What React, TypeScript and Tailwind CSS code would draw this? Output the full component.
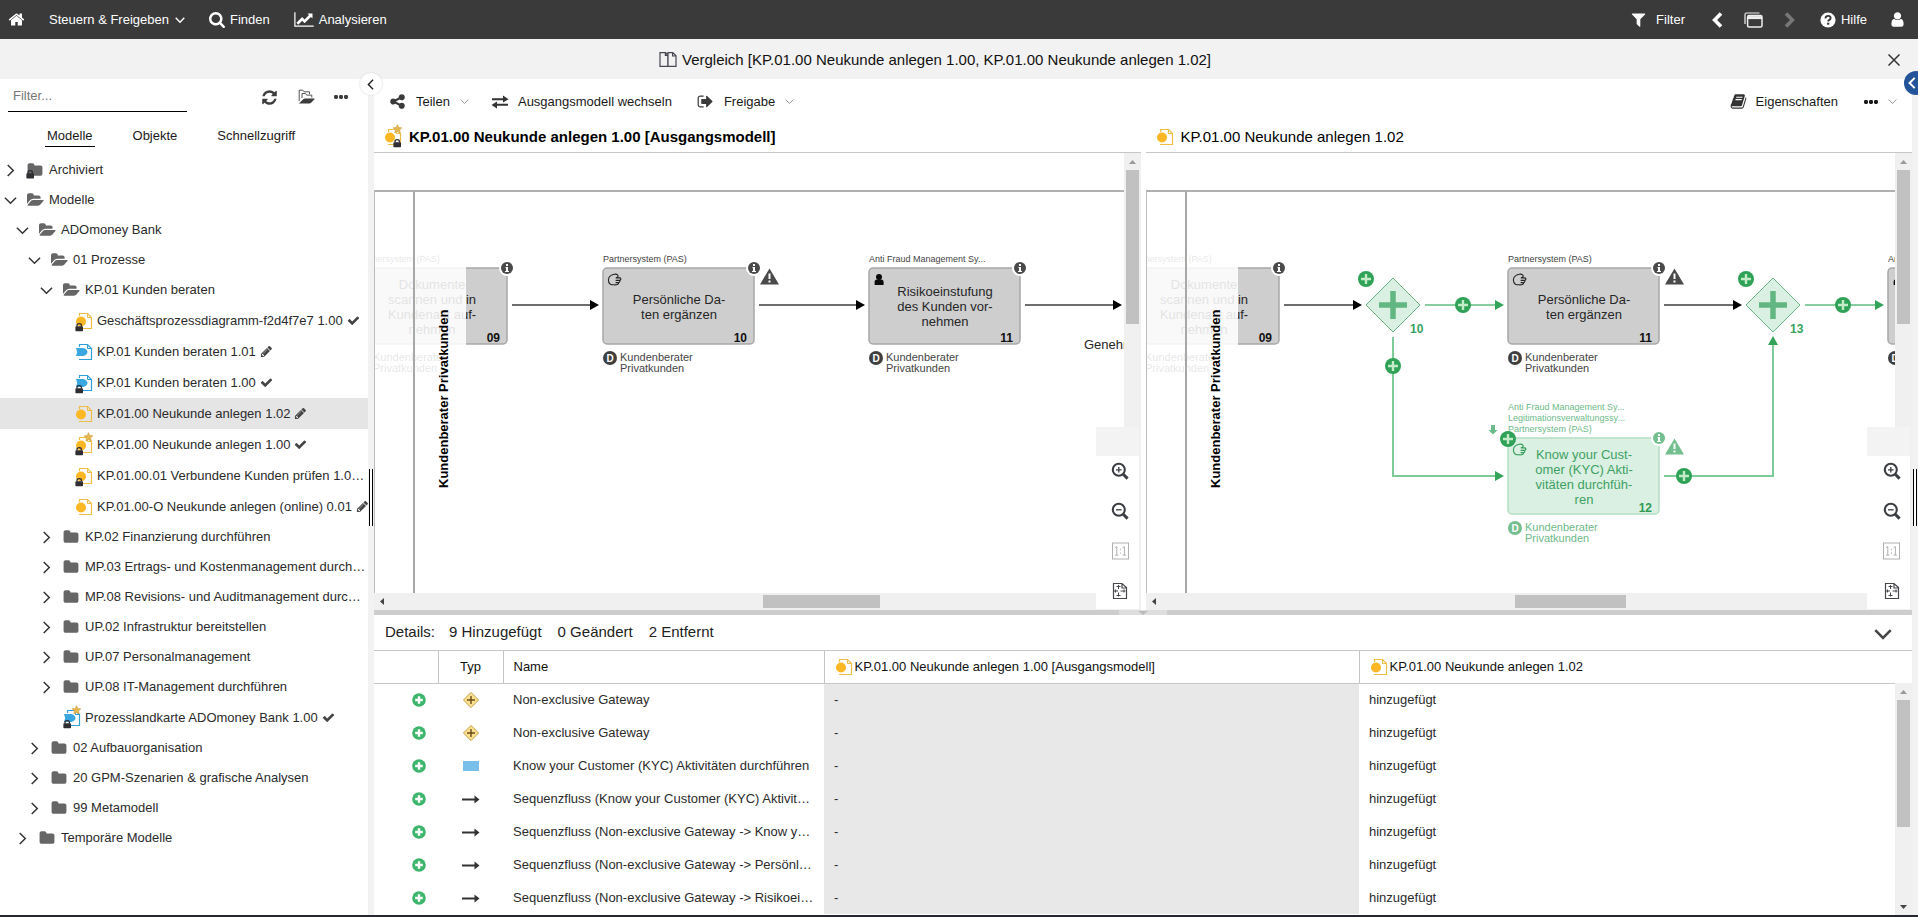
import type { ReactNode } from "react";

/* ------------------------------------------------------------------ icons */

type IconProps = { className?: string };

function Glyph({ d, className, box = "0 0 1792 1792" }: { d: string; className?: string; box?: string }) {
  return (
    <svg viewBox={box} className={className} fill="currentColor" aria-hidden="true">
      <path d={d} />
    </svg>
  );
}

const P = {
  home: "M1472 992v480q0 26-19 45t-45 19h-384v-384h-256v384h-384q-26 0-45-19t-19-45v-480q0-1 .5-3t.5-3l575-474 575 474q1 2 1 6zm223-69l-62 74q-8 9-21 11h-3q-13 0-21-7l-692-577-692 577q-12 8-24 7-13-2-21-11l-62-74q-8-10-7-23.5t11-21.5l719-599q32-26 76-26t76 26l244 204v-195q0-14 9-23t23-9h192q14 0 23 9t9 23v408l219 182q10 8 11 21.5t-7 23.5z",
  search:
    "M1216 832q0-185-131.5-316.5t-316.5-131.5-316.5 131.5-131.5 316.5 131.5 316.5 316.5 131.5 316.5-131.5 131.5-316.5zm512 832q0 52-38 90t-90 38q-54 0-90-38l-343-342q-179 124-399 124-143 0-273.5-55.5t-225-150-150-225-55.5-273.5 55.5-273.5 150-225 225-150 273.5-55.5 273.5 55.5 225 150 150 225 55.5 273.5q0 220-124 399l343 343q37 37 37 90z",
  chart:
    "M2048 1536v128h-2048v-1536h128v1408h1920zm-128-1248v435q0 21-19.5 29.5t-35.5-7.5l-121-121-633 633q-10 10-23 10t-23-10l-233-233-416 416-192-192 585-585q10-10 23-10t23 10l233 233 464-464-121-121q-16-16-7.5-35.5t29.5-19.5h435q14 0 23 9t9 23z",
  filter:
    "M1595 295q17 41-14 70l-493 493v742q0 42-39 59-13 5-25 5-27 0-45-19l-256-256q-19-19-19-45v-486l-493-493q-31-29-14-70 17-39 59-39h1280q42 0 59 39z",
  user: "M1536 1399q0 109-62.5 187t-150.5 78h-854q-88 0-150.5-78t-62.5-187q0-85 8.5-160.5t31.5-152 58.5-131 94-89 134.5-34.5q131 128 313 128t313-128q76 0 134.5 34.5t94 89 58.5 131 31.5 152 8.5 160.5zm-256-887q0 159-112.5 271.5t-271.5 112.5-271.5-112.5-112.5-271.5 112.5-271.5 271.5-112.5 271.5 112.5 112.5 271.5z",
  refresh:
    "M1639 1056q0 5-1 7-64 268-268 434.5t-478 166.5q-146 0-282.5-55t-243.5-157l-129 129q-19 19-45 19t-45-19-19-45v-448q0-26 19-45t45-19h448q26 0 45 19t19 45-19 45l-137 137q71 66 161 102t187 36q134 0 250-65t186-179q11-17 53-117 8-23 30-23h192q13 0 22.5 9.5t9.5 22.5zm25-800v448q0 26-19 45t-45 19h-448q-26 0-45-19t-19-45 19-45l138-138q-148-137-349-137-134 0-250 65t-186 179q-11 17-53 117-8 23-30 23h-199q-13 0-22.5-9.5t-9.5-22.5v-7q65-268 270-434.5t480-166.5q146 0 284 55.5t245 156.5l130-129q19-19 45-19t45 19 19 45z",
  folder:
    "M1728 608v704q0 92-66 158t-158 66h-1216q-92 0-158-66t-66-158v-960q0-92 66-158t158-66h320q92 0 158 66t66 158v32h672q92 0 158 66t66 158z",
  folderOpen:
    "M1879 952q0 31-31 66l-336 396q-43 51-120.5 86.5t-143.5 35.5h-1088q-34 0-60.5-13t-26.5-43q0-31 31-66l336-396q43-51 120.5-86.5t143.5-35.5h1088q34 0 60.5 13t26.5 43zm-343-344v160h-832q-94 0-197 47.5t-164 119.5l-337 396-5 6q0-4-.5-12.5t-.5-12.5v-960q0-92 66-158t158-66h320q92 0 158 66t66 158v32h544q92 0 158 66t66 158z",
  check:
    "M1671 566q0 40-28 68l-724 724-136 136q-28 28-68 28t-68-28l-136-136-362-362q-28-28-28-68t28-68l136-136q28-28 68-28t68 28l294 295 656-657q28-28 68-28t68 28l136 136q28 28 28 68z",
  pencil:
    "M491 1536l91-91-235-235-91 91v107h128v128h107zm523-928q0-22-22-22-10 0-17 7l-542 542q-7 7-7 17 0 22 22 22 10 0 17-7l542-542q7-7 7-17zm-54-192l416 416-832 832h-416v-416zm683 96q0 53-37 90l-166 166-416-416 166-165q36-38 90-38 53 0 91 38l235 234q37 39 37 91z",
  share:
    "M1344 1024q133 0 226.5 93.5t93.5 226.5-93.5 226.5-226.5 93.5-226.5-93.5-93.5-226.5q0-12 2-34l-360-180q-92 86-218 86-133 0-226.5-93.5t-93.5-226.5 93.5-226.5 226.5-93.5q126 0 218 86l360-180q-2-22-2-34 0-133 93.5-226.5t226.5-93.5 226.5 93.5 93.5 226.5-93.5 226.5-226.5 93.5q-126 0-218-86l-360 180q2 22 2 34t-2 34l360 180q92-86 218-86z",
  signOut:
    "M704 1440q0 4 1 20t.5 26.5-3 23.5-10 19.5-20.5 6.5h-320q-119 0-203.5-84.5t-84.5-203.5v-704q0-119 84.5-203.5t203.5-84.5h320q13 0 22.5 9.5t9.5 22.5q0 4 1 20t.5 26.5-3 23.5-10 19.5-20.5 6.5h-320q-66 0-113 47t-47 113v704q0 66 47 113t113 47h312l11.5 1 11.5 3 8 5.5 7 9 2 13.5zm928-544q0 26-19 45l-544 544q-19 19-45 19t-45-19-19-45v-288h-448q-26 0-45-19t-19-45v-384q0-26 19-45t45-19h448v-288q0-26 19-45t45-19 45 19l544 544q19 19 19 45z",
  book: "M1703 478q40 57 18 129l-275 906q-19 64-76.5 107.5t-122.5 43.5h-923q-77 0-148.5-53.5t-99.5-131.5q-24-67-2-127 0-4 3-27t4-37q1-8-3-21.5t-3-19.5q2-11 8-21t16.5-23.5 16.5-23.5q23-38 45-91.5t30-91.5q3-10 .5-30t-.5-28q3-11 17-28t17-23q21-36 42-92t25-90q1-9-2.5-32t.5-28q4-13 22-30.5t22-22.5q19-26 42.5-84.5t27.5-96.5q1-8-3-25.5t-2-26.5q2-8 9-18t18-23 17-21q8-12 16.5-30.5t15-35 16-36 19.5-32 26.5-23.5 36-11.5 47.5 5.5l-1 3q38-9 51-9h761q74 0 114 56t18 130l-274 906q-36 119-71.5 153.5t-128.5 34.5h-869q-27 0-38 15-11 16-1 43 24 70 144 70h923q29 0 56-15.5t35-41.5l300-987q7-22 5-57 38 15 59 43zm-1064 2q-4 13 2 22.5t20 9.5h608q13 0 25.5-9.5t16.5-22.5l21-64q4-13-2-22.5t-20-9.5h-608q-13 0-25.5 9.5t-16.5 22.5zm-83 256q-4 13 2 22.5t20 9.5h608q13 0 25.5-9.5t16.5-22.5l21-64q4-13-2-22.5t-20-9.5h-608q-13 0-25.5 9.5t-16.5 22.5z",
};

function Angle({ dir, className, width = 1.6 }: IconProps & { dir: "left" | "right" | "down"; width?: number }) {
  const d = { left: "M9 1L3 7l6 6", right: "M4 1l6 6-6 6", down: "M1 4l6 6 6-6" }[dir];
  return (
    <svg viewBox="0 0 14 14" className={className} fill="none" stroke="currentColor" strokeWidth={width} aria-hidden="true">
      <path d={d} />
    </svg>
  );
}

function Dots({ className }: IconProps) {
  return (
    <svg viewBox="0 0 14 4" className={className} fill="currentColor" aria-hidden="true">
      <rect x="0" y="0" width="4" height="4" rx="1.4" />
      <rect x="5" y="0" width="4" height="4" rx="1.4" />
      <rect x="10" y="0" width="4" height="4" rx="1.4" />
    </svg>
  );
}

function Swap({ className }: IconProps) {
  return (
    <svg viewBox="0 0 18 14" className={className} fill="currentColor" aria-hidden="true">
      <path d="M1 3.200h11V.6l5.500 3.600L12 7.600V5.200H1z M17 8.800H6V6.400L.5 10 6 13.400v-2.600h11z" />
    </svg>
  );
}

function CompareIcon({ className }: IconProps) {
  return (
    <svg viewBox="0 0 18 17" className={className} fill="none" stroke="#4a4652" strokeWidth="1.2" aria-hidden="true">
      <path d="M1 1.6h5.6L8.8 4v11.4H1z M9 15.4V1.6h4.8L17 4.8v10.6z M13.6 1.8v3.2H17 M6.4 1.8v2.6h2.4" />
    </svg>
  );
}

function FoldersIcon({ className }: IconProps) {
  return (
    <svg viewBox="0 0 18 16" className={className} aria-hidden="true">
      <path d="M5 9V4.500h3.600l1.200 1.600h5v2.400" fill="none" stroke="#555" />
      <path d="M2.200 12V1.200h3.600l1.300 1.600h5.400v2.400" fill="none" stroke="#555" />
      <path d="M1.800 14.6L6 10.400q.7-.8 1.800-.8h9.400q.8 0 .3.7l-3.4 3.500q-.7.8-1.800.8z" fill="#3d3d3d" />
    </svg>
  );
}

function WindowsIcon({ className }: IconProps) {
  return (
    <svg viewBox="0 0 19 16" className={className} fill="none" stroke="#eee" aria-hidden="true">
      <path d="M1 12V2.5Q1 1 2.5 1H15.5" strokeWidth="1.2" />
      <rect x="3.6" y="3.6" width="14.4" height="11.4" rx="1.5" strokeWidth="1.5" />
      <path d="M3.6 5.6H18" strokeWidth="3" />
    </svg>
  );
}

function HelpIcon({ className }: IconProps) {
  return (
    <svg viewBox="0 0 16 16" className={className} aria-hidden="true">
      <circle cx="8" cy="8" r="7.6" fill="#fff" />
      <path d="M5.4 6.3Q5.7 3.9 8.1 3.9q2.5 0 2.5 2.1 0 1.1-1.2 1.9-1.2.7-1.2 1.7" fill="none" stroke="#3a3a3a" strokeWidth="1.9" />
      <rect x="7.1" y="10.7" width="2.2" height="2" fill="#3a3a3a" />
    </svg>
  );
}

function ZoomIcon({ plus, className }: IconProps & { plus?: boolean }) {
  return (
    <svg viewBox="0 0 18 18" className={className} fill="none" stroke="#3a3d42" aria-hidden="true">
      <circle cx="7.8" cy="7.8" r="6" strokeWidth="2.1" />
      <path d="M12.2 12.2l4.4 4.4" strokeWidth="3" />
      <path d={plus ? "M5 7.8h5.6M7.8 5v5.6" : "M5 7.8h5.6"} strokeWidth="1.3" />
    </svg>
  );
}

function OneToOneIcon({ className }: IconProps) {
  return (
    <svg viewBox="0 0 17 17" className={className} aria-hidden="true">
      <rect x=".5" y=".5" width="16" height="16" fill="none" stroke="#b0b0b0" />
      <path d="M3 5.4L4.8 4v8.6M3 12.6h3.4M10.6 5.4L12.4 4v8.6M10.6 12.6H14M8.4 6.4v1.4M8.4 10v1.4" fill="none" stroke="#b0b0b0" />
    </svg>
  );
}

function FitIcon({ className }: IconProps) {
  return (
    <svg viewBox="0 0 16 18" className={className} fill="none" stroke="#46464c" aria-hidden="true">
      <path d="M1.500 1.500h8.500l4.500 4v11h-13z M10 1.500v4.500h4.500" strokeWidth="1.200" />
      <path d="M6.500 3v4M4.500 4.500h4M6.500 14.500v-4M4.500 13.500h4M2 9h4M3.500 7.500v3M8.500 9h5M12 7.500v3" />
    </svg>
  );
}

type DocKind = "process" | "map";

function DocIcon({ kind = "process", lock, star, className = "h-5 w-[18px]" }: IconProps & { kind?: DocKind; lock?: "left" | "right"; star?: boolean }) {
  const line = kind === "map" ? "#2f9fd8" : "#efbd45";
  const lx = lock === "right" ? 9 : 0;
  return (
    <svg viewBox="0 0 18 20" className={`${className} shrink-0 overflow-visible`} aria-hidden="true">
      <path d="M4.500 5V2.500h8l4 4V17.500h-12.500" fill="none" stroke={line} strokeWidth="1.200" />
      <path d="M12.500 2.500V6.500h4" fill="none" stroke={line} />
      {kind === "map" ? (
        <path d="M1 6H8.500Q12.500 7.500 12.500 10T8.500 14H1L2.200 10z" fill="#3ba7e0" />
      ) : (
        <circle cx="6" cy="10.500" r="5" fill="#fbb824" />
      )}
      {star && (
        <path
          d="M13.500-2.400l1.300 2.800 3.100.4-2.300 2.100.6 3.100-2.700-1.500-2.700 1.500.6-3.100-2.300-2.100 3.100-.4z"
          fill="#e6b64e"
          stroke="#c99a3a"
          strokeWidth=".5"
        />
      )}
      {lock && (
        <g transform={`translate(${lx} 12)`}>
          <rect x=".4" y="3.200" width="7.600" height="5" rx=".8" fill="#2e2e33" />
          <path d="M2 3.600V2.400q0-1.800 2.200-1.800t2.200 1.800v1.200" fill="none" stroke="#2e2e33" strokeWidth="1.300" />
        </g>
      )}
    </svg>
  );
}

function LockedFolder() {
  return (
    <span className="relative block h-4 w-4 shrink-0">
      <Glyph d={P.folder} className="h-4 w-4 text-[#666]" />
      <svg viewBox="0 0 9 9" className="absolute top-2 -left-px h-[9px] w-[9px]" aria-hidden="true">
        <rect x=".4" y="3.200" width="7.600" height="5.400" rx=".8" fill="#2e2e33" />
        <path d="M2 3.600V2.400q0-1.800 2.200-1.800t2.200 1.800v1.200" fill="none" stroke="#2e2e33" strokeWidth="1.300" />
      </svg>
    </span>
  );
}

/* -------------------------------------------------------------- tree data */

type Node = {
  level: 0 | 1 | 2 | 3 | 4;
  label: string;
  type: "closed" | "open" | "locked" | "doc";
  kind?: DocKind;
  lock?: boolean;
  star?: boolean;
  state?: "check" | "pencil";
  active?: boolean;
};

const tree: Node[] = [
  { level: 0, label: "Archiviert", type: "locked" },
  { level: 0, label: "Modelle", type: "open" },
  { level: 1, label: "ADOmoney Bank", type: "open" },
  { level: 2, label: "01 Prozesse", type: "open" },
  { level: 3, label: "KP.01 Kunden beraten", type: "open" },
  { level: 4, label: "Geschäftsprozessdiagramm-f2d4f7e7 1.00", type: "doc", lock: true, state: "check" },
  { level: 4, label: "KP.01 Kunden beraten 1.01", type: "doc", kind: "map", state: "pencil" },
  { level: 4, label: "KP.01 Kunden beraten 1.00", type: "doc", kind: "map", lock: true, state: "check" },
  { level: 4, label: "KP.01.00 Neukunde anlegen 1.02", type: "doc", state: "pencil", active: true },
  { level: 4, label: "KP.01.00 Neukunde anlegen 1.00", type: "doc", lock: true, star: true, state: "check" },
  { level: 4, label: "KP.01.00.01 Verbundene Kunden prüfen 1.0…", type: "doc", lock: true },
  { level: 4, label: "KP.01.00-O Neukunde anlegen (online) 0.01", type: "doc", state: "pencil" },
  { level: 3, label: "KP.02 Finanzierung durchführen", type: "closed" },
  { level: 3, label: "MP.03 Ertrags- und Kostenmanagement durch…", type: "closed" },
  { level: 3, label: "MP.08 Revisions- und Auditmanagement durc…", type: "closed" },
  { level: 3, label: "UP.02 Infrastruktur bereitstellen", type: "closed" },
  { level: 3, label: "UP.07 Personalmanagement", type: "closed" },
  { level: 3, label: "UP.08 IT-Management durchführen", type: "closed" },
  { level: 3, label: "Prozesslandkarte ADOmoney Bank 1.00", type: "doc", kind: "map", lock: true, star: true, state: "check" },
  { level: 2, label: "02 Aufbauorganisation", type: "closed" },
  { level: 2, label: "20 GPM-Szenarien & grafische Analysen", type: "closed" },
  { level: 2, label: "99 Metamodell", type: "closed" },
  { level: 1, label: "Temporäre Modelle", type: "closed" },
];

const indent = ["pl-0", "pl-3", "pl-6", "pl-9", "pl-12"];

function TreeRow({ node }: { node: Node }) {
  const doc = node.type === "doc";
  return (
    <li className={`flex items-center ${indent[node.level]} ${doc ? "h-[31px]" : "h-[30px]"} ${node.active ? "bg-[#e5e5e5]" : ""}`}>
      <span className="flex w-[27px] shrink-0 pl-1">
        {!doc && (
          <button type="button" aria-label={`${node.label} umschalten`} className="text-[#333]">
            <Angle dir={node.type === "open" ? "down" : "right"} className="h-[13px] w-[13px]" />
          </button>
        )}
      </span>
      <span className="flex w-[22px] shrink-0">
        {doc && <DocIcon kind={node.kind} lock={node.lock ? "left" : undefined} star={node.star} />}
        {node.type === "locked" && <LockedFolder />}
        {node.type === "open" && <Glyph d={P.folderOpen} box="0 0 1920 1792" className="h-4 w-[17px] text-[#666]" />}
        {node.type === "closed" && <Glyph d={P.folder} className="h-4 w-4 text-[#666]" />}
      </span>
      <span className="whitespace-nowrap">{node.label}</span>
      {node.state && <Glyph d={P[node.state]} className="ml-1 h-[13px] w-[13px] shrink-0 text-[#444]" />}
    </li>
  );
}

function Sidebar() {
  return (
    <aside className="flex w-[368px] shrink-0 flex-col overflow-hidden text-[#2b2b2b]">
      <div className="flex items-start pt-1 pr-5 pl-2">
        <input
          type="text"
          aria-label="Filter"
          placeholder="Filter..."
          className="h-[29px] w-[179px] border-b border-black px-[5px] pb-1 placeholder:text-[#777] focus:outline-none"
        />
        <div className="ml-auto flex h-7 items-center gap-[19px]">
          <button type="button" aria-label="Aktualisieren">
            <Glyph d={P.refresh} className="h-[17px] w-[17px] text-[#3d3d3d]" />
          </button>
          <button type="button" aria-label="Ordner">
            <FoldersIcon className="h-4 w-[18px]" />
          </button>
          <button type="button" aria-label="Mehr" className="text-[#3d3d3d]">
            <Dots className="h-1 w-[14px]" />
          </button>
        </div>
      </div>
      <nav className="flex gap-9 pt-[13px] pb-2 pl-[45px] text-[#1a1a1a]">
        <button type="button" className="h-[22px] border-b border-black px-[2px]">Modelle</button>
        <button type="button" className="h-[22px] px-[2px]">Objekte</button>
        <button type="button" className="h-[22px] px-[2px]">Schnellzugriff</button>
      </nav>
      <ul>
        {tree.map((n) => (
          <TreeRow key={n.label} node={n} />
        ))}
      </ul>
    </aside>
  );
}

/* --------------------------------------------------------------- diagrams */

type Tone = "grey" | "green";

const tones = {
  grey: { fill: "#cecece", edge: "#a8a8a8", text: "#262626", label: "#444", icon: "#4a4a4a", num: "#111", hand: "#222" },
  green: { fill: "#daf0e2", edge: "#b4dec4", text: "#3fa163", label: "#6dba89", icon: "#74bf8f", num: "#2f9a55", hand: "#2f9a55" },
};

function Task({
  x,
  y,
  num,
  lines,
  systems,
  marker,
  warn,
  tone = "grey",
}: {
  x: number;
  y: number;
  num: string;
  lines: string[];
  systems: string[];
  marker?: "hand" | "person";
  warn?: boolean;
  tone?: Tone;
}) {
  const c = tones[tone];
  const first = 43 - ((lines.length - 1) * 15) / 2;
  return (
    <g transform={`translate(${x} ${y})`}>
      {systems.map((s, i) => (
        <text key={s} x="0" y={-6 - (systems.length - 1 - i) * 11} fontSize="9" fill={c.label}>
          {s}
        </text>
      ))}
      <rect x="0" y="0" width="151" height="76" rx="4" fill={c.fill} stroke={c.edge} strokeWidth="1.500" />
      {marker === "hand" && (
        <path
          d="M8 7.400C4.600 9.400 4.600 14 7.400 16.200C8.600 17 13.600 17 14.600 16.400C15.800 15.800 15.600 15 15.300 14.600C17 14.400 17.200 13 16.400 12.500C18.300 12.200 18.300 10.100 16.800 9.900H12.800C15 9.600 15.800 7.800 14.600 6.800C13.200 5.600 9.600 6.200 8 7.400zM12.600 12.400H16.400M12.600 14.600H15.300"
          fill="none"
          stroke={c.hand}
          strokeWidth="1.100"
        />
      )}
      {marker === "person" && (
        <g fill="#0a0a0a">
          <circle cx="10" cy="9" r="3" />
          <path d="M5.600 16.500V14Q5.600 11.400 8 11.400H12Q14.600 11.400 14.600 14V16.500Q14.600 17 14 17H6.200Q5.600 17 5.600 16.500z" />
        </g>
      )}
      {lines.map((l, i) => (
        <text key={l} x="76" y={first + i * 15} fontSize="13" textAnchor="middle" fill={c.text}>
          {l}
        </text>
      ))}
      <text x="144" y="74" fontSize="12" fontWeight="bold" textAnchor="end" fill={c.num}>
        {num}
      </text>
      <circle cx="151" cy="0" r="8" fill="#fff" />
      <circle cx="151" cy="0" r="6" fill={c.icon} />
      <path d="M150-4h2v2h-2zM149.500-1h2.500v4h1v1h-4v-1h1v-3h-.5z" fill="#fff" />
      {warn && (
        <g>
          <path d="M166.500 .6L176 16.400H157z" fill={c.icon} />
          <path d="M166.500 5.500V11M166.500 12.400V14.400" stroke="#fff" strokeWidth="2" />
        </g>
      )}
      <circle cx="7" cy="90" r="7" fill={tone === "grey" ? "#3f3f3f" : c.icon} />
      <text x="7" y="94" fontSize="10" fontWeight="bold" textAnchor="middle" fill="#fff">
        D
      </text>
      <text x="17" y="93" fontSize="11" fill={c.label}>
        Kundenberater
      </text>
      <text x="17" y="104" fontSize="11" fill={c.label}>
        Privatkunden
      </text>
    </g>
  );
}

function Arrow({ from, to, y, green }: { from: number; to: number; y: number; green?: boolean }) {
  return (
    <g>
      <path d={`M${from} ${y}H${to - 6}`} stroke={green ? "#86cda0" : "#6e6e6e"} strokeWidth="2" />
      <path d={`M${to - 9} ${y - 5}L${to} ${y}L${to - 9} ${y + 5}z`} fill={green ? "#34a45b" : "#000"} />
    </g>
  );
}

function Added({ x, y }: { x: number; y: number }) {
  return (
    <g>
      <circle cx={x} cy={y} r="8" fill="#2fa257" />
      <path d={`M${x - 5} ${y}h10M${x} ${y - 5}v10`} stroke="#c4ecc8" strokeWidth="2.400" />
    </g>
  );
}

function Gateway({ x, y, num }: { x: number; y: number; num: string }) {
  return (
    <g>
      <path d={`M${x} ${y - 27}l27 27l-27 27l-27-27z`} fill="#daf0e2" stroke="#68b583" />
      <path d={`M${x - 14} ${y}h28M${x} ${y - 14}v28`} stroke="#62b681" strokeWidth="5.500" />
      <text x={x + 17} y={y + 28} fontSize="12" fontWeight="bold" fill="#3aa35f">
        {num}
      </text>
      <Added x={x - 27} y={y - 26} />
    </g>
  );
}

function Pool() {
  return (
    <g>
      <Task x={-18} y={115} num="09" lines={["Dokumente", "scannen und in", "Kundenakt auf-", "nehmen"]} systems={["Partnersystem (PAS)"]} />
      <rect x="0" y="96" width="92" height="130" fill="#fff" fillOpacity=".87" />
      <path d="M0 38H3000" stroke="#b0b0b0" strokeWidth="2" />
      <path d="M.5 38V3000" stroke="#bdbdbd" />
      <path d="M40 38V3000" stroke="#a8a8a8" strokeWidth="2" />
      <text transform="translate(74 335) rotate(-90)" fontSize="13" fontWeight="bold" fill="#000">
        Kundenberater Privatkunden
      </text>
    </g>
  );
}

function BaseDiagram() {
  return (
    <>
      <Pool />
      <Arrow from={138} to={225} y={152} />
      <Task x={229} y={115} num="10" lines={["Persönliche Da-", "ten ergänzen"]} systems={["Partnersystem (PAS)"]} marker="hand" warn />
      <Arrow from={385} to={491} y={152} />
      <Task x={495} y={115} num="11" lines={["Risikoeinstufung", "des Kunden vor-", "nehmen"]} systems={["Anti Fraud Management Sy..."]} marker="person" />
      <Arrow from={651} to={748} y={152} />
      <text x="710" y="196" fontSize="13" fill="#262626">
        Genehmigung
      </text>
    </>
  );
}

function ChangedDiagram() {
  return (
    <>
      <Pool />
      <Arrow from={138} to={216} y={152} />
      <Arrow from={279} to={358} y={152} green />
      <Added x={317} y={152} />
      <path d="M247 184V323H352" fill="none" stroke="#7ccb98" strokeWidth="2" />
      <path d="M349 318L358 323L349 328z" fill="#34a45b" />
      <Added x={247} y={213} />
      <Gateway x={247} y={152} num="10" />
      <Task x={362} y={115} num="11" lines={["Persönliche Da-", "ten ergänzen"]} systems={["Partnersystem (PAS)"]} marker="hand" warn />
      <Arrow from={518} to={596} y={152} />
      <Gateway x={627} y={152} num="13" />
      <Arrow from={659} to={738} y={152} green />
      <Added x={697} y={152} />
      <path d="M518 323H627V190" fill="none" stroke="#7ccb98" strokeWidth="2" />
      <path d="M622 192L627 183L632 192z" fill="#34a45b" />
      <Task
        x={362}
        y={285}
        num="12"
        tone="green"
        lines={["Know your Cust-", "omer (KYC) Akti-", "vitäten durchfüh-", "ren"]}
        systems={["Anti Fraud Management Sy...", "Legitimationsverwaltungssy...", "Partnersystem (PAS)"]}
        marker="hand"
        warn
      />
      <Added x={362} y={286} />
      <path d="M345 272h4v5h2.500l-4.500 4.500l-4.500-4.500h2.500z" fill="#6cbb88" />
      <Added x={538} y={323} />
      <Task x={742} y={115} num="14" lines={["Risikoeinstufung", "des Kunden vor-", "nehmen"]} systems={["Anti Fraud Management Sy..."]} marker="person" />
    </>
  );
}

function ZoomTools() {
  return (
    <div className="absolute right-[2px] bottom-px w-[43px] bg-white">
      <div className="h-[29px] bg-[#f3f3f3]" />
      <div className="flex flex-col items-center gap-[22px] pt-[6px] pb-[9px] pl-[6px]">
        <button type="button" aria-label="Vergrößern">
          <ZoomIcon plus className="h-[18px] w-[18px]" />
        </button>
        <button type="button" aria-label="Verkleinern">
          <ZoomIcon className="h-[18px] w-[18px]" />
        </button>
        <button type="button" aria-label="Originalgröße" disabled>
          <OneToOneIcon className="h-[18px] w-[17px]" />
        </button>
        <button type="button" aria-label="Einpassen">
          <FitIcon className="h-[18px] w-4" />
        </button>
      </div>
    </div>
  );
}

function VerticalBar({ thumb, end }: { thumb: string; end?: boolean }) {
  return (
    <div className="flex w-[17px] flex-col items-center bg-[#f0f0f0]">
      <svg viewBox="0 0 17 17" className="h-[17px] w-[17px] shrink-0" fill="#9a9a9a" aria-hidden="true">
        <path d="M5 11l3.500-4L12 11z" />
      </svg>
      <div className={`w-[13px] shrink-0 bg-[#c1c1c1] ${thumb}`} />
      {end && (
        <svg viewBox="0 0 17 17" className="mt-auto h-[17px] w-[17px] shrink-0" fill="#444" aria-hidden="true">
          <path d="M5 7l3.500 4L12 7z" />
        </svg>
      )}
    </div>
  );
}

function Pane({ title, icon, bold, thumb, children }: { title: string; icon: ReactNode; bold?: boolean; thumb: string; children: ReactNode }) {
  return (
    <section className="flex min-w-0 flex-1 flex-col">
      <h2 className={`flex h-8 items-center border-b border-[#c6c6c6] pl-[10px] text-[15px] text-black ${bold ? "font-bold" : ""}`}>
        <span className="flex w-[25px] shrink-0">{icon}</span>
        {title}
      </h2>
      <div className="relative grid min-h-0 flex-1 grid-cols-[1fr_17px] grid-rows-[1fr_17px]">
        <div className="min-h-0 min-w-0 overflow-hidden">
          <svg className="h-full w-full overflow-hidden" fontFamily="'Liberation Sans', Arial, sans-serif">
            {children}
          </svg>
        </div>
        <VerticalBar thumb="h-[154px]" />
        <div className="col-span-2 flex items-center bg-[#f0f0f0]">
          <svg viewBox="0 0 17 17" className="h-[17px] w-[17px] shrink-0" fill="#444" aria-hidden="true">
            <path d="M10 5L6 8.500L10 12z" />
          </svg>
          <div className={`h-[13px] bg-[#c1c1c1] ${thumb}`} />
        </div>
        <ZoomTools />
      </div>
    </section>
  );
}

/* ---------------------------------------------------------------- details */

type RowType = "gateway" | "task" | "flow";

const rows: { type: RowType; name: string }[] = [
  { type: "gateway", name: "Non-exclusive Gateway" },
  { type: "gateway", name: "Non-exclusive Gateway" },
  { type: "task", name: "Know your Customer (KYC) Aktivitäten durchführen" },
  { type: "flow", name: "Sequenzfluss (Know your Customer (KYC) Aktivit…" },
  { type: "flow", name: "Sequenzfluss (Non-exclusive Gateway -> Know y…" },
  { type: "flow", name: "Sequenzfluss (Non-exclusive Gateway -> Persönl…" },
  { type: "flow", name: "Sequenzfluss (Non-exclusive Gateway -> Risikoei…" },
];

function TypeIcon({ type }: { type: RowType }) {
  return (
    <svg viewBox="0 0 18 18" className="mx-auto h-[18px] w-[18px]" aria-hidden="true">
      {type === "gateway" && (
        <>
          <path d="M9 1.400L16.600 9L9 16.600L1.400 9z" fill="#fbe08e" stroke="#c4a04a" />
          <path d="M5 9h8M9 5v8" stroke="#6b4a1c" strokeWidth="1.400" />
        </>
      )}
      {type === "task" && <rect x="1" y="4" width="16" height="10" fill="#78c0ea" />}
      {type === "flow" && (
        <>
          <path d="M0 9.500H13" stroke="#333" strokeWidth="2" />
          <path d="M12.500 5.500L17.500 9.500L12.500 13.500z" fill="#333" />
        </>
      )}
    </svg>
  );
}

function Details() {
  const th = "border-[#c6c6c6] text-left font-normal";
  return (
    <section className="flex h-[300px] shrink-0 flex-col">
      <div className="flex h-9 shrink-0 items-center border-b border-[#c6c6c6] pr-5 pb-[2px] pl-[11px] text-[15px] text-[#222]">
        <span className="mr-[14px]">Details:</span>
        <span className="mr-4">9 Hinzugefügt</span>
        <span className="mr-4">0 Geändert</span>
        <span>2 Entfernt</span>
        <button type="button" aria-label="Details einklappen" className="ml-auto pt-1 text-[#444]">
          <Angle dir="down" width={2} className="h-[18px] w-[18px]" />
        </button>
      </div>
      <div className="relative min-h-0 flex-1 overflow-hidden">
        <table className="w-full table-fixed border-collapse text-[#2b2b2b]">
          <colgroup>
            <col className="w-[64px]" />
            <col className="w-[65px]" />
            <col className="w-[321px]" />
            <col className="w-[535px]" />
            <col />
          </colgroup>
          <thead>
            <tr className="h-8 border-b border-[#c6c6c6] text-[#111]">
              <th className={`${th} border-r`} aria-label="Änderung" />
              <th className="border-r border-[#c6c6c6] text-center font-normal">Typ</th>
              <th className={`${th} border-r pl-[10px]`}>Name</th>
              <th className={`${th} border-r pl-[10px]`}>
                <span className="flex items-center gap-[2px]">
                  <DocIcon />
                  KP.01.00 Neukunde anlegen 1.00 [Ausgangsmodell]
                </span>
              </th>
              <th className={`${th} pl-[10px]`}>
                <span className="flex items-center gap-[2px]">
                  <DocIcon />
                  KP.01.00 Neukunde anlegen 1.02
                </span>
              </th>
            </tr>
          </thead>
          <tbody>
            {rows.map((r, i) => (
              <tr key={i} className="h-[33px]">
                <td className="pl-[38px]">
                  <svg viewBox="0 0 14 14" className="h-[14px] w-[14px]" role="img" aria-label="hinzugefügt">
                    <circle cx="7" cy="7" r="6.800" fill="#3db56c" />
                    <path d="M3.200 7h7.600M7 3.200v7.600" stroke="#fff" strokeWidth="2.400" />
                  </svg>
                </td>
                <td>
                  <TypeIcon type={r.type} />
                </td>
                <td className="pl-[10px] whitespace-nowrap">{r.name}</td>
                <td className="bg-[#e8e8e8] pl-[10px]">-</td>
                <td className="pl-[10px]">hinzugefügt</td>
              </tr>
            ))}
          </tbody>
        </table>
        <div className="absolute top-8 right-0 bottom-0 flex">
          <VerticalBar thumb="h-[127px]" end />
        </div>
      </div>
    </section>
  );
}

/* -------------------------------------------------------------------- app */

function TopBar() {
  return (
    <header className="flex h-[39px] shrink-0 items-center bg-[#3a3a3a] pr-3 pl-2 text-white">
      <a href="#home" aria-label="Start" className="mr-6">
        <Glyph d={P.home} className="h-[17px] w-[17px]" />
      </a>
      <button type="button" className="mr-6 flex items-center gap-[6px]">
        Steuern &amp; Freigeben
        <Angle dir="down" width={2} className="h-[10px] w-[10px]" />
      </button>
      <button type="button" className="mr-6 flex items-center gap-[5px]">
        <Glyph d={P.search} box="64 128 1664 1664" className="h-4 w-4" />
        Finden
      </button>
      <button type="button" className="flex items-center gap-[5px]">
        <Glyph d={P.chart} box="0 0 2048 1792" className="h-[17px] w-5" />
        Analysieren
      </button>
      <div className="ml-auto flex items-center">
        <button type="button" className="mr-[26px] flex items-center gap-[9px]">
          <Glyph d={P.filter} className="h-[17px] w-[17px]" />
          Filter
        </button>
        <button type="button" aria-label="Zurück" className="mr-[21px]">
          <svg viewBox="0 0 12 16" className="h-4 w-3" fill="none" stroke="#fff" strokeWidth="3.600" aria-hidden="true">
            <path d="M10 1.500L3.600 8L10 14.500" />
          </svg>
        </button>
        <button type="button" aria-label="Fenster" className="mr-[21px]">
          <WindowsIcon className="h-4 w-[19px]" />
        </button>
        <button type="button" aria-label="Vor" className="mr-6" disabled>
          <svg viewBox="0 0 12 16" className="h-4 w-3" fill="none" stroke="#777" strokeWidth="3.600" aria-hidden="true">
            <path d="M2 1.500L8.400 8L2 14.500" />
          </svg>
        </button>
        <button type="button" className="mr-[22px] flex items-center gap-[5px]">
          <HelpIcon className="h-4 w-4" />
          Hilfe
        </button>
        <button type="button" aria-label="Benutzer">
          <Glyph d={P.user} className="h-[17px] w-[17px]" />
        </button>
      </div>
    </header>
  );
}

function Toolbar() {
  return (
    <div className="flex h-[42px] shrink-0 items-center pt-[3px] pr-[15px] pl-[15px] text-[#1a1a1a]">
      <button type="button" className="mr-[22px] flex items-center">
        <Glyph d={P.share} className="mr-[10px] h-[17px] w-[17px] text-[#3a3a3a]" />
        Teilen
        <Angle dir="down" width={1.4} className="ml-[10px] h-[9px] w-[9px] text-[#888]" />
      </button>
      <button type="button" className="mr-[25px] flex items-center gap-[9px]">
        <Swap className="h-[14px] w-[18px] text-[#333]" />
        Ausgangsmodell wechseln
      </button>
      <button type="button" className="flex items-center">
        <Glyph d={P.signOut} className="mr-[10px] h-[17px] w-[17px] text-[#3a3a3a]" />
        Freigabe
        <Angle dir="down" width={1.4} className="ml-[10px] h-[9px] w-[9px] text-[#888]" />
      </button>
      <button type="button" className="mr-[26px] ml-auto flex items-center gap-[9px]">
        <Glyph d={P.book} className="h-[17px] w-[17px] text-[#333]" />
        Eigenschaften
      </button>
      <button type="button" aria-label="Mehr" className="flex items-center gap-[10px]">
        <Dots className="h-1 w-[14px]" />
        <Angle dir="down" width={1.4} className="h-[9px] w-[9px] text-[#888]" />
      </button>
    </div>
  );
}

export default function App() {
  return (
    <div className="flex h-screen flex-col overflow-hidden border-b-2 border-[#23272e] bg-[#f2f2f2] font-['Liberation_Sans',Arial,sans-serif] text-[13px] leading-4">
      <TopBar />
      <div className="flex h-10 shrink-0 items-center pt-px">
        <h1 className="flex flex-1 items-center justify-center gap-[5px] text-[15px] text-[#111]">
          <CompareIcon className="h-[17px] w-[18px]" />
          Vergleich [KP.01.00 Neukunde anlegen 1.00, KP.01.00 Neukunde anlegen 1.02]
        </h1>
        <button type="button" aria-label="Schließen" className="flex w-12 justify-center">
          <svg viewBox="0 0 12 12" className="h-3 w-3" stroke="#333" strokeWidth="1.500" aria-hidden="true">
            <path d="M.5.5l11 11M11.500.5l-11 11" />
          </svg>
        </button>
      </div>
      <div className="flex min-h-0 flex-1">
        <div className="flex bg-white">
          <Sidebar />
        </div>
        <div className="relative flex w-[6px] shrink-0 items-center justify-center">
          <div className="h-[57px] w-1 border-x border-black bg-white" />
          <button
            type="button"
            aria-label="Seitenleiste einklappen"
            className="absolute -top-[6px] -left-[8px] flex h-[22px] w-[22px] items-center justify-center rounded-full bg-white text-[#222] shadow-[0_0_2px_#ccc]"
          >
            <Angle dir="left" width={1.800} className="h-[11px] w-[11px]" />
          </button>
        </div>
        <main className="flex min-w-0 flex-1 flex-col bg-white">
          <Toolbar />
          <div className="flex min-h-0 flex-1 gap-[5px]">
            <Pane title="KP.01.00 Neukunde anlegen 1.00 [Ausgangsmodell]" bold icon={<DocIcon lock="right" star />} thumb="ml-[372px] w-[117px]">
              <BaseDiagram />
            </Pane>
            <Pane title="KP.01.00 Neukunde anlegen 1.02" icon={<DocIcon />} thumb="ml-[352px] w-[111px]">
              <ChangedDiagram />
            </Pane>
          </div>
          <div className="flex h-[5px] shrink-0 justify-center bg-[#cdcdcd]">
            <div className="flex w-12 justify-center bg-[#dedede]">
              <svg viewBox="0 0 10 5" className="h-[5px] w-[10px]" fill="#bbb" aria-hidden="true">
                <path d="M0 1h10L5 5z" />
              </svg>
            </div>
          </div>
          <Details />
        </main>
        <div className="relative flex w-[6px] shrink-0 items-center justify-center">
          <div className="h-[57px] w-1 border-x border-black bg-white" />
          <button
            type="button"
            aria-label="Seitenleiste ausklappen"
            className="absolute -top-2 -left-[8px] flex h-6 w-6 items-center rounded-full bg-[#235499] pl-[3px] text-white"
          >
            <Angle dir="left" width={2.400} className="h-3 w-3" />
          </button>
        </div>
      </div>
    </div>
  );
}
